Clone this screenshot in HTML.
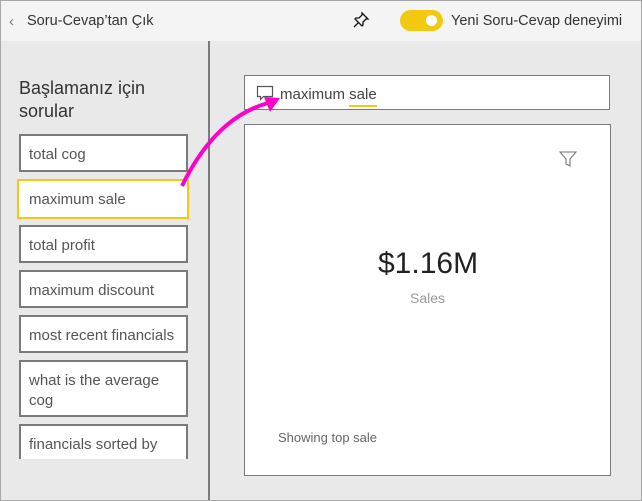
<!DOCTYPE html>
<html><head><style>
*{margin:0;padding:0;box-sizing:border-box}
body{width:642px;height:501px;overflow:hidden;font-family:"Liberation Sans",sans-serif;position:relative;background:#e9e9e9}
.frame{position:absolute;left:0;top:0;width:642px;height:501px;border:1px solid #a8a8a8;pointer-events:none}
.hdr{position:absolute;left:0;top:0;width:642px;height:41px;background:#f4f4f4}
.t{position:absolute;white-space:nowrap}
.btn{position:absolute;left:19px;width:169px;background:#fff;border:2px solid #7a7a7a;color:#555;font-size:15px;padding:9px 8px;line-height:20px}
.div{position:absolute;left:208px;top:41px;width:2px;height:460px;background:#7a7a7a}
.box{position:absolute;background:#fff;border:1.5px solid #7a7a7a}
</style></head><body>
<div class="hdr"></div>
<div class="t" style="left:9px;top:13px;font-size:15px;color:#777">&lsaquo;</div>
<div class="t" style="left:27px;top:13px;font-size:14.5px;color:#333">Soru-Cevap’tan Çık</div>
<svg style="position:absolute;left:352px;top:11px" width="18" height="18" viewBox="0 0 18 18"><path d="M10 2l6 6-2 0-3 3 0 3-1 1-7-7 1-1 3 0 3-3z M6 12l-4 4" fill="none" stroke="#111" stroke-width="1.3"/></svg>
<div style="position:absolute;left:400px;top:10px;width:43px;height:21px;border-radius:11px;background:#f2c811"></div>
<div style="position:absolute;left:426px;top:15px;width:11px;height:11px;border-radius:6px;background:#fff"></div>
<div class="t" style="left:451px;top:13px;font-size:14.5px;color:#333">Yeni Soru-Cevap deneyimi</div>
<div class="div"></div>
<div class="t" style="left:19px;top:77px;font-size:18px;color:#333;line-height:23px;white-space:normal;width:170px">Başlamanız için sorular</div>
<div class="btn" style="top:134px;height:38px">total cog</div>
<div class="btn" style="top:179px;height:40px;left:17px;width:172px;border-color:#f2c811;padding-left:10px">maximum sale</div>
<div class="btn" style="top:225px;height:38px">total profit</div>
<div class="btn" style="top:270px;height:38px">maximum discount</div>
<div class="btn" style="top:315px;height:38px">most recent financials</div>
<div class="btn" style="top:360px;height:57px">what is the average cog</div>
<div class="btn" style="top:424px;height:40px;border-bottom:none;overflow:hidden">financials sorted by</div>
<div style="position:absolute;left:0;top:459px;width:208px;height:42px;background:#e9e9e9"></div>
<div class="box" style="left:244px;top:75px;width:366px;height:35px"></div>
<svg style="position:absolute;left:256px;top:85px" width="20" height="18" viewBox="0 0 20 18"><path d="M1.5 1.5h15v10h-9l-3 3v-3h-3z" fill="none" stroke="#555" stroke-width="1.2"/></svg>
<div class="t" style="left:280px;top:86px;font-size:15px;color:#444">maximum <span style="border-bottom:2px solid #f2c811;padding-bottom:2px">sale</span></div>
<div class="box" style="left:244px;top:124px;width:367px;height:352px"></div>
<svg style="position:absolute;left:559px;top:151px" width="18" height="17" viewBox="0 0 18 17"><path d="M1 1h16l-6 7v7l-4-2v-5z" fill="none" stroke="#777" stroke-width="1.1"/></svg>
<div class="t" style="left:378px;top:247px;font-size:30px;color:#222">$1.16M</div>
<div class="t" style="left:410px;top:290px;font-size:14px;color:#999">Sales</div>
<div class="t" style="left:278px;top:430px;font-size:13px;color:#666">Showing top sale</div>
<svg style="position:absolute;left:0;top:0" width="642" height="501"><path d="M182 186 Q215 118 268 103" fill="none" stroke="#ff00cc" stroke-width="4"/><path d="M280 98 L264 97 L270 112 z" fill="#ff00cc"/></svg>
<div class="frame"></div>
</body></html>
